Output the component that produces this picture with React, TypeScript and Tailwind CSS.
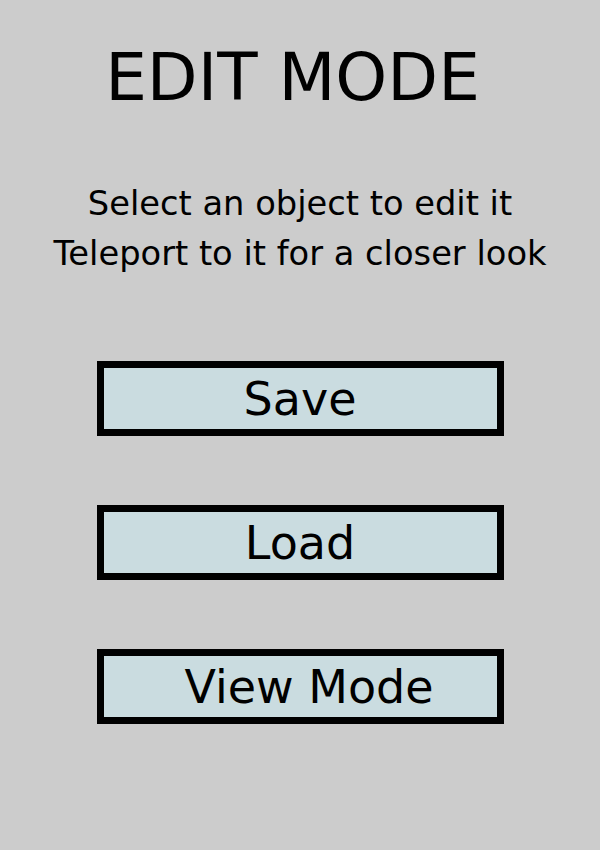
export default function App() {
    const buttons = [
        { label: 'Save', extra: '' },
        { label: 'Load', extra: '' },
        { label: 'View Mode', extra: 'pl-[18px]' },
    ];

    return (
        <div className="w-[600px] h-[850px] bg-[#cccccc] flex flex-col items-center text-black font-['DejaVu_Sans',sans-serif]">
            {/* judul */}
            <h1 className="mt-[45px] pr-[15px] text-[66px] leading-[66px] font-normal">EDIT MODE</h1>

            {/* keterangan */}
            <div className="mt-[68px] text-[33.7px] leading-[50px] text-center">
                <p>Select an object to edit it</p>
                <p>Teleport to it for a closer look</p>
            </div>

            {/* tombol-tombol */}
            <div className="mt-[82px] flex flex-col gap-[69px]">
                {buttons.map(b => (
                    <button
                        key={b.label}
                        className={`w-[407px] h-[75px] border-[7px] border-black bg-[#cadce0] text-[46px] leading-none flex items-center justify-center ${b.extra}`}
                    >
                        {b.label}
                    </button>
                ))}
            </div>
        </div>
    );
}
